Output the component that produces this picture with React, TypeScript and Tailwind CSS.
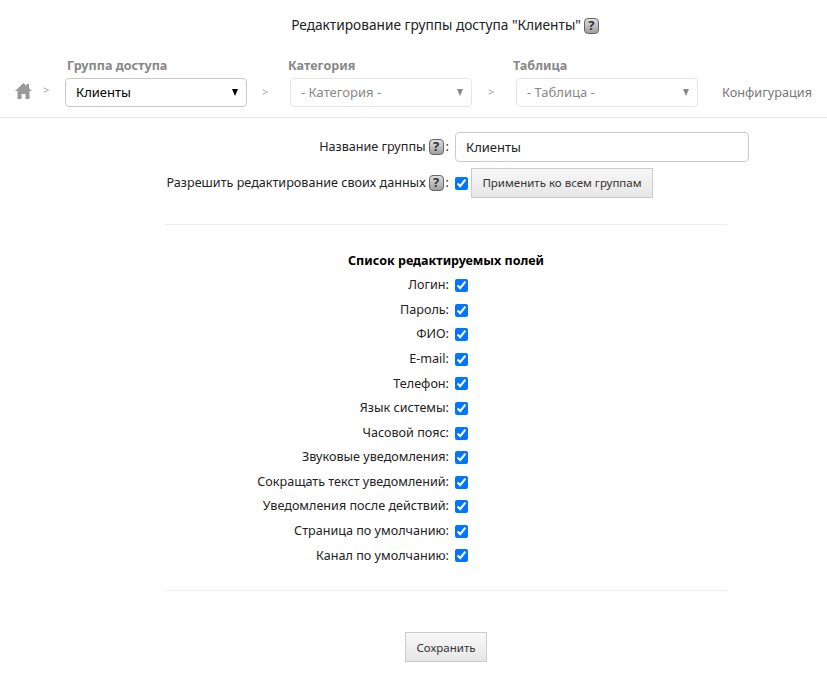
const FIELDS = [
  'Логин',
  'Пароль',
  'ФИО',
  'E-mail',
  'Телефон',
  'Язык системы',
  'Часовой пояс',
  'Звуковые уведомления',
  'Сокращать текст уведомлений',
  'Уведомления после действий',
  'Страница по умолчанию',
  'Канал по умолчанию',
];

function Help() {
  return (
    <span className="mr-[2px] ml-[3px] inline-flex h-[16px] w-[15px] items-center justify-center rounded-[4px] border-[1.5px] border-[#666] bg-gradient-to-b from-[#e0e0e0] to-[#a0a0a0] text-[13px] leading-none font-bold text-[#333]">
      ?
    </span>
  );
}

function HomeIcon() {
  return (
    <svg width="17" height="16" viewBox="0 0 17 16" className="mb-[8px] ml-[15px] fill-[#999]">
      <path d="M8.5 0 0 8h2.5v8h4v-5h4v5h4V8H17l-3-2.8V1h-2.5v2z" />
    </svg>
  );
}

function Crumb({
  label,
  value,
  active,
  labelClass,
}: {
  label: string;
  value: string;
  active?: boolean;
  labelClass: string;
}) {
  return (
    <div className="flex w-[182px] flex-col">
      <span className={`mb-[3px] h-[18px] text-[12.6px] leading-[18px] font-bold whitespace-nowrap text-[#888] ${labelClass}`}>
        {label}
      </span>
      <div
        className={`relative flex h-[29px] items-center rounded-[4px] border bg-white pl-[10px] text-[13px] ${
          active
            ? 'border-[#c8c8c8] text-black'
            : 'border-[#e6e6e6] text-[#888]'
        }`}
      >
        {value}
        <span
          className={`absolute top-[10px] right-[8px] h-0 w-0 border-x-[3.5px] border-t-[7px] border-x-transparent ${
            active ? 'border-t-black' : 'border-t-[#888]'
          }`}
        />
      </div>
    </div>
  );
}

function Sep() {
  return <span className="text-[11px] text-[#aaa]">&gt;</span>;
}

export default function App() {
  return (
    <div className="h-[679px] w-[827px] overflow-hidden bg-white font-['Noto_Sans','Open_Sans',sans-serif] text-[12.6px] text-[#222]">
      <header className="flex h-[49px] items-center justify-center pt-[2px] pl-[65px] text-[13.7px]">
        Редактирование группы доступа "Клиенты"
        <Help />
      </header>

      <nav className="flex h-[69px] items-start border-b border-[#e8e8e8] pt-[8px]">
        <div className="flex h-[50px] w-[65px] items-end">
          <HomeIcon />
          <span className="mb-[7px] ml-[11px]">
            <Sep />
          </span>
        </div>
        <Crumb label="Группа доступа" value="Клиенты" active labelClass="ml-[2px]" />
        <div className="flex h-[50px] w-[43px] items-end pb-[7px] pl-[15px]">
          <Sep />
        </div>
        <Crumb label="Категория" value="- Категория -" labelClass="-ml-[2px]" />
        <div className="flex h-[50px] w-[44px] items-end pb-[7px] pl-[16px]">
          <Sep />
        </div>
        <Crumb label="Таблица" value="- Таблица -" labelClass="-ml-[3px]" />
        <span className="mt-[26px] ml-[24px] text-[12.7px] leading-[18px] whitespace-nowrap text-[#777]">
          Конфигурация
        </span>
      </nav>

      <section className="pt-[14px]">
        <div className="flex items-center">
          <div className="flex w-[449px] items-center justify-end">
            Название группы
            <Help />:
          </div>
          <input
            readOnly
            value="Клиенты"
            className="ml-[6px] h-[30px] w-[294px] rounded-[4px] border border-[#ccc] px-[10px] text-[13px] text-[#222] outline-none"
          />
        </div>

        <div className="mt-[6px] flex items-center">
          <div className="flex w-[449px] items-center justify-end">
            Разрешить редактирование своих данных
            <Help />:
          </div>
          <input type="checkbox" checked readOnly className="m-0 ml-[6px] h-[13px] w-[13px]" />
          <button className="ml-[3px] h-[30px] w-[182px] border border-[#ccc] bg-gradient-to-b from-[#f8f8f8] to-[#e6e6e6] text-[11.5px] text-[#333]">
            Применить ко всем группам
          </button>
        </div>

        <hr className="mt-[26px] ml-[165px] w-[562px] border-[#eee]" />

        <h2 className="mt-[27px] ml-[348px] text-[12.55px] leading-[18px] font-bold text-black">
          Список редактируемых полей
        </h2>

        <ul className="mt-[3.35px]">
          {FIELDS.map((field) => (
            <li key={field} className="flex h-[24.58px] items-center">
              <span className="w-[449px] text-right">{field}:</span>
              <input type="checkbox" checked readOnly className="m-0 ml-[6px] h-[13px] w-[13px]" />
            </li>
          ))}
        </ul>

        <hr className="mt-[22px] ml-[165px] w-[562px] border-[#eee]" />

        <button className="mt-[41px] ml-[405px] h-[30px] w-[82px] border border-[#ccc] bg-gradient-to-b from-[#f8f8f8] to-[#e6e6e6] text-[11.5px] text-[#333]">
          Сохранить
        </button>
      </section>
    </div>
  );
}
